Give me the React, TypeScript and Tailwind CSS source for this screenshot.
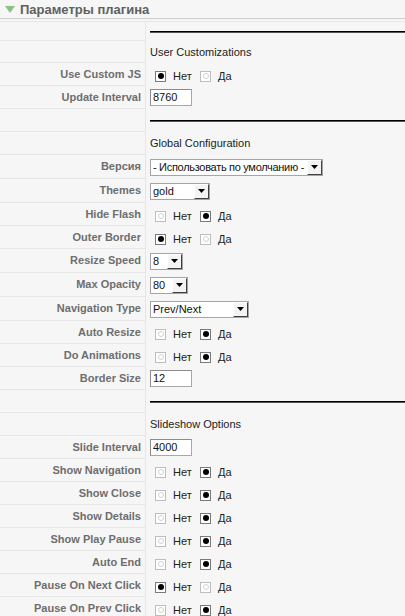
import React from "react";

type Row =
  | { kind: "hr"; h: number }
  | { kind: "text"; text: string; h: number }
  | { kind: "radio"; label: string; yes: boolean }
  | { kind: "input"; label: string; value: string }
  | { kind: "select"; label: string; value: string; w: number; tight?: boolean };

const rows: Row[] = [
  { kind: "hr", h: 19 },
  { kind: "text", text: "User Customizations", h: 22 },
  { kind: "radio", label: "Use Custom JS", yes: false },
  { kind: "input", label: "Update Interval", value: "8760" },
  { kind: "hr", h: 23 },
  { kind: "text", text: "Global Configuration", h: 23 },
  { kind: "select", label: "Версия", value: "- Использовать по умолчанию -", w: 173, tight: true },
  { kind: "select", label: "Themes", value: "gold", w: 60 },
  { kind: "radio", label: "Hide Flash", yes: true },
  { kind: "radio", label: "Outer Border", yes: false },
  { kind: "select", label: "Resize Speed", value: "8", w: 33 },
  { kind: "select", label: "Max Opacity", value: "80", w: 38 },
  { kind: "select", label: "Navigation Type", value: "Prev/Next", w: 99 },
  { kind: "radio", label: "Auto Resize", yes: true },
  { kind: "radio", label: "Do Animations", yes: true },
  { kind: "input", label: "Border Size", value: "12" },
  { kind: "hr", h: 23 },
  { kind: "text", text: "Slideshow Options", h: 23 },
  { kind: "input", label: "Slide Interval", value: "4000" },
  { kind: "radio", label: "Show Navigation", yes: true },
  { kind: "radio", label: "Show Close", yes: true },
  { kind: "radio", label: "Show Details", yes: true },
  { kind: "radio", label: "Show Play Pause", yes: true },
  { kind: "radio", label: "Auto End", yes: true },
  { kind: "radio", label: "Pause On Next Click", yes: false },
  { kind: "radio", label: "Pause On Prev Click", yes: true },
];

function RadioBox({ checked }: { checked: boolean }) {
  return checked ? (
    <span className="w-[11px] h-[11px] border border-[#7a7a7a] bg-white flex items-center justify-center shrink-0">
      <span className="w-[6px] h-[6px] rounded-full bg-black" />
    </span>
  ) : (
    <span className="w-[11px] h-[11px] border border-[#bdbdbd] bg-white flex items-center justify-center shrink-0">
      <span className="w-[6px] h-[6px] rounded-full border border-[#d2d2d2]" />
    </span>
  );
}

function RadioGroup({ yes }: { yes: boolean }) {
  return (
    <div className="flex items-center ml-[5px] mt-[3px] text-[11px] text-[#222]">
      <div className="flex items-center gap-[7px] w-[45px]">
        <RadioBox checked={!yes} />
        <span>Нет</span>
      </div>
      <div className="flex items-center gap-[7px]">
        <RadioBox checked={yes} />
        <span>Да</span>
      </div>
    </div>
  );
}

function TextInput({ value }: { value: string }) {
  return (
    <div className="w-[42px] h-[17px] bg-white border border-[#a8a8a8] border-t-[#8c8c8c] border-l-[#8c8c8c] flex items-center pl-[2px] text-[11px] text-[#111]">
      {value}
    </div>
  );
}

function Select({ value, w, tight }: { value: string; w: number; tight?: boolean }) {
  return (
    <div
      className="relative h-[17px] bg-white border border-[#a5a5a5] flex items-center text-[11px] text-[#111] overflow-hidden"
      style={{ width: w }}
    >
      <span className={`pl-[2px] whitespace-nowrap ${tight ? "tracking-[-0.3px]" : ""}`}>{value}</span>
      <span className="absolute right-0 top-0 bottom-0 w-[15px] bg-[#f4f4f4] border-l border-t border-white border-r border-r-[#404040] border-b border-b-[#404040] flex items-center justify-center">
        <svg width="7" height="4" viewBox="0 0 7 4">
          <path d="M0 0H7L3.5 4Z" fill="#000" />
        </svg>
      </span>
    </div>
  );
}

export default function App() {
  return (
    <div
      className="w-[405px] h-[616px] overflow-hidden bg-[#f6f6f6]"
      style={{ fontFamily: '"Liberation Sans", Arial, sans-serif' }}
    >
      <div className="h-[19px] border-b border-[#cccccc] flex items-center">
        <svg width="10" height="7" viewBox="0 0 10 7" className="ml-[5px] mr-[5px]">
          <path d="M0 0H10L5 7Z" fill="#86c186" />
        </svg>
        <span className="text-[13px] font-bold text-[#606060] leading-none">Параметры плагина</span>
      </div>
      <div className="h-[2px]" />
      <div className="h-px bg-[#e6e6e6]" />
      {rows.map((r, i) => {
        const h =
          r.kind === "hr" || r.kind === "text" ? r.h : r.kind === "select" ? 24 : 23;
        const label = r.kind === "hr" || r.kind === "text" ? "" : r.label;
        return (
          <div key={i} className="flex" style={{ height: h }}>
            <div className="w-[146px] shrink-0 border-b border-r border-[#e6e6e6] flex items-center justify-end pr-[4px] text-[11px] font-bold text-[#6e6e6e] whitespace-nowrap">
              {label}
            </div>
            <div className="flex-1 flex items-center pl-[4px]">
              {r.kind === "hr" && (
                <div className="w-full">
                  <div className="h-px bg-black" />
                  <div className="h-px bg-[#555]" />
                </div>
              )}
              {r.kind === "text" && (
                <span className="text-[11px] text-[#222]">{r.text}</span>
              )}
              {r.kind === "radio" && <RadioGroup yes={r.yes} />}
              {r.kind === "input" && <TextInput value={r.value} />}
              {r.kind === "select" && <Select value={r.value} w={r.w} tight={r.tight} />}
            </div>
          </div>
        );
      })}
    </div>
  );
}
